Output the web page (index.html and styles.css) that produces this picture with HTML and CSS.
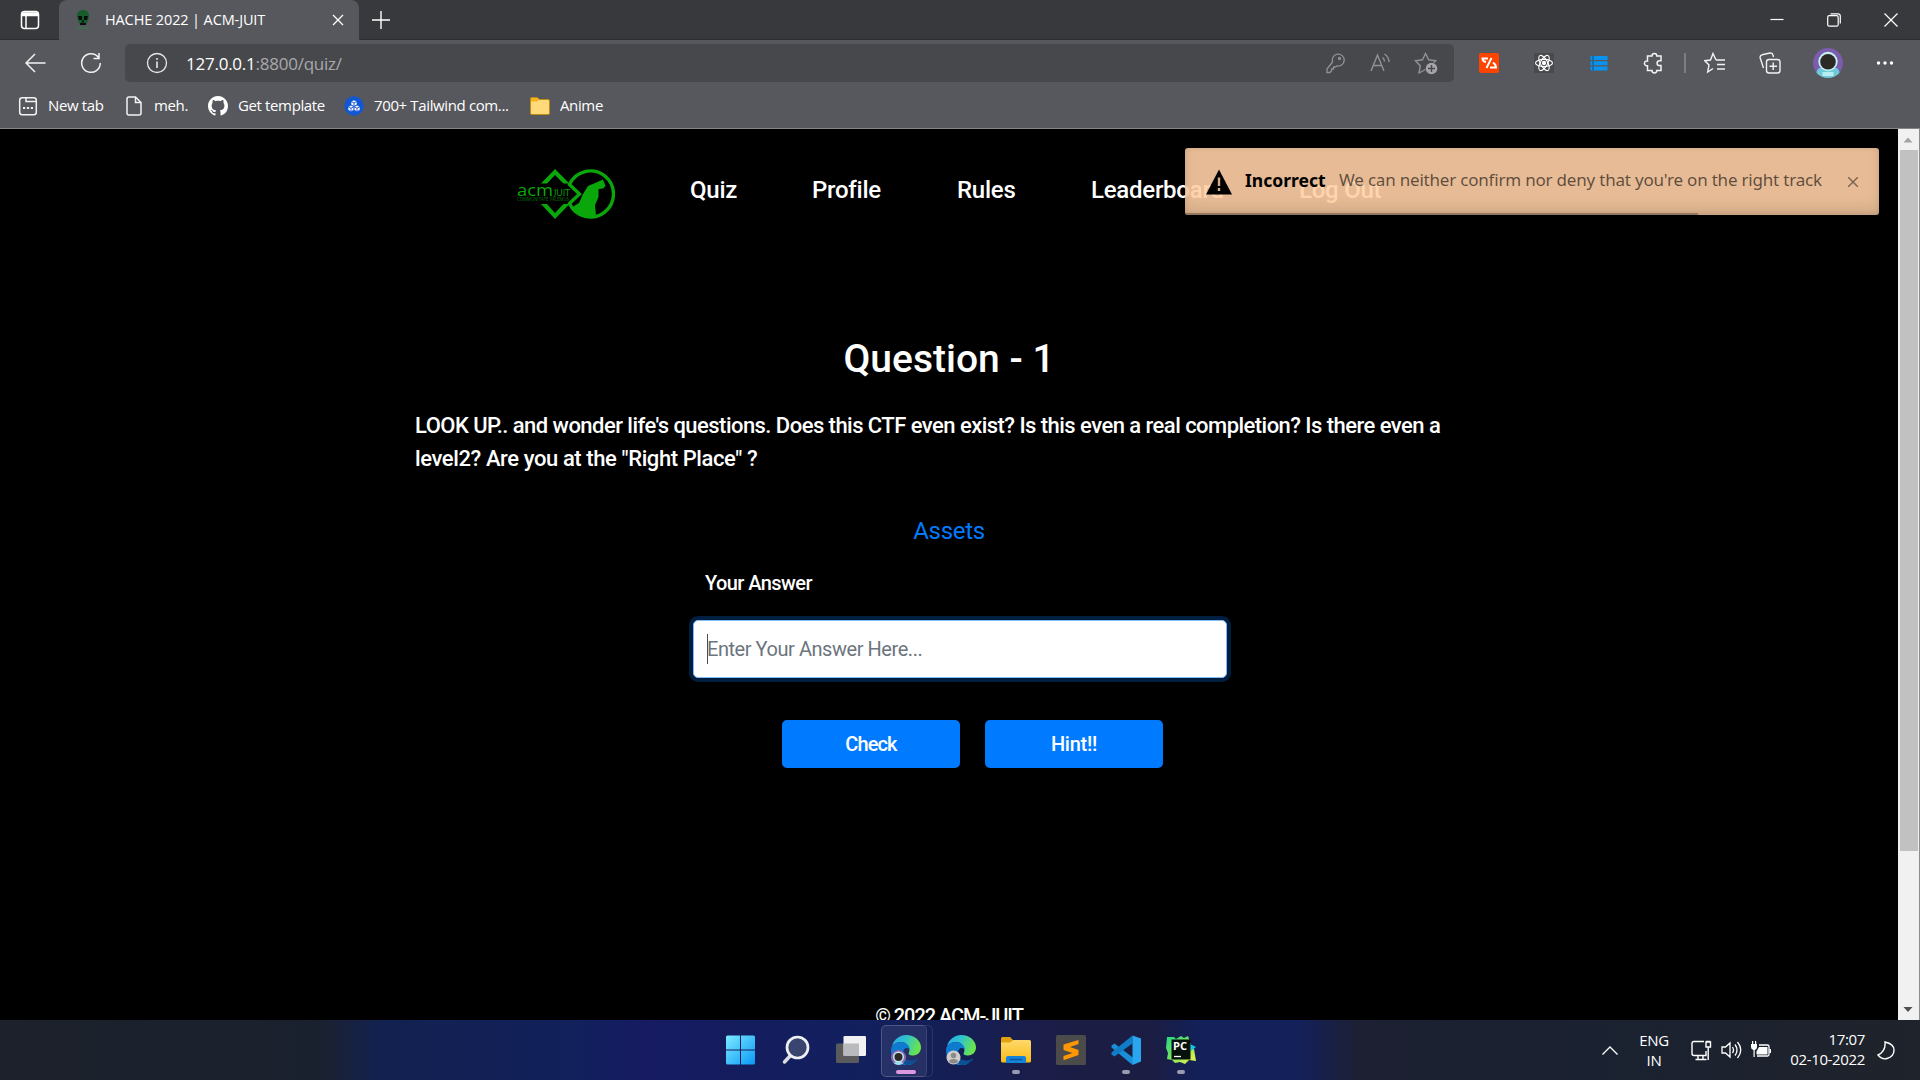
FILE: index.html
```html
<!DOCTYPE html>
<html lang="en">
<head>
<meta charset="utf-8">
<title>HACHE 2022 | ACM-JUIT</title>
<link rel="stylesheet" href="styles.css">
</head>
<body>
<div class="tabstrip">
  <div class="tabmenu"><svg width="20" height="20" viewBox="0 0 20 20" fill="none" stroke="#fff" stroke-width="1.5"><rect x="1.5" y="1.5" width="17" height="17" rx="3"/><path d="M2 3.5h16M2 5h16" stroke-width="2.5"/><path d="M6 6v12"/></svg></div>
  <div class="tab">
    <svg class="favicon" width="14" height="20" viewBox="0 0 14 20"><path d="M7 0C3 0 1 2.500 1 6l1 5 2 3h6l2-3 1-5c0-3.500-2-6-6-6z" fill="#175c2a"/><path d="M2 6h4v4H3zM8 6h4l-1 4H8zM6 10.500h2v2H6zM4 13h6v2H4z" fill="#061008"/><path d="M2 18h10" stroke="#39734a" stroke-width="2" stroke-dasharray="3 1"/></svg>
    <span class="tabtitle">HACHE 2022 | ACM-JUIT</span>
    <svg class="tabclose" width="12" height="12" viewBox="0 0 12 12" stroke="#fff" stroke-width="1.300"><path d="M1 1l10 10M11 1L1 11"/></svg>
  </div>
  <svg class="newtab" width="18" height="18" viewBox="0 0 18 18" stroke="#fff" stroke-width="1.400"><path d="M9 0v18M0 9h18"/></svg>
  <div class="winctl">
    <svg width="14" height="14" viewBox="0 0 14 14" stroke="#fff" stroke-width="1.200"><path d="M.5 6.500h13"/></svg>
    <svg width="14" height="14" viewBox="0 0 14 14" fill="none" stroke="#fff" stroke-width="1.200"><rect x=".7" y="2.700" width="10.500" height="10.500" rx="1.500"/><path d="M3.500.8H11q2.300 0 2.300 2.300v7.500"/></svg>
    <svg width="14" height="14" viewBox="0 0 14 14" stroke="#fff" stroke-width="1.200"><path d="M.5.5l13 13M13.500.5l-13 13"/></svg>
  </div>
</div>
<div class="toolbar">
  <svg class="back" width="21" height="20" viewBox="0 0 21 20" fill="none" stroke="#f2f2f2" stroke-width="1.500"><path d="M20.500 10H1M10 1L1 10l9 9"/></svg>
  <svg class="reload" width="22" height="22" viewBox="0 0 22 22" fill="none" stroke="#f2f2f2" stroke-width="1.500"><path d="M18.500 5.500a9.300 9.300 0 1 0 1.800 5.500M19 1v5.500h-5.500"/></svg>
  <div class="address">
    <svg width="22" height="22" viewBox="0 0 22 22" fill="none" stroke="#e8e8e8" stroke-width="1.300"><circle cx="11" cy="11" r="9.500"/><path d="M11 9.500V16M11 6v1.700" stroke-width="1.600"/></svg>
    <span class="url"><b>127.0.0.1</b>:8800/quiz/</span>
    <div class="addricons">
      <svg width="22" height="22" viewBox="0 0 22 22" fill="none" stroke="#929296" stroke-width="1.300"><path d="M8.500 10a6 6 0 1 1 4.500 4L11 15H9.500v2H7.500v2L6 20.500H3V17z"/><circle cx="15.500" cy="6.500" r="1"/></svg>
      <svg width="22" height="22" viewBox="0 0 22 22" fill="none" stroke="#929296" stroke-width="1.400"><path d="M2 19L8.500 3 15 19M4.500 13.500h8M13.500 5.500q2 1.500 2 4M15.500 2q4.500 3 4.500 8"/></svg>
      <svg width="24" height="24" viewBox="0 0 24 24" fill="none" stroke="#929296" stroke-width="1.400"><path d="M11.500 18.500L5 22l1.300-7L1.500 9.800l7-1L11.500 2.500l3.200 6.300 7 1-2 2"/><circle cx="17.500" cy="17.500" r="5.800" fill="#a5a5a8" stroke="none"/><path d="M17.500 14v7M14 17.500h7" stroke="#47484b"/></svg>
    </div>
  </div>
  <div class="extensions">
    <svg width="20" height="20" viewBox="0 0 20 20" fill="none" stroke="#fff" stroke-width="2"><rect width="20" height="20" rx="2" fill="#ff4400" stroke="none"/><path d="M9 5.500H3.500q0 3 3.500 3.500"/><path d="M12.500 5L7.500 15" /><path d="M11 14.500h6q0-3-3-5"/></svg>
    <svg class="e2" width="20" height="20" viewBox="0 0 20 20" fill="none" stroke="#fff" stroke-width="1.100"><rect width="20" height="20" fill="#494a4d" stroke="none"/><ellipse cx="10" cy="10" rx="8.500" ry="3.600"/><ellipse cx="10" cy="10" rx="8.500" ry="3.600" transform="rotate(60 10 10)"/><ellipse cx="10" cy="10" rx="8.500" ry="3.600" transform="rotate(120 10 10)"/><circle cx="10" cy="10" r="1.600" fill="#fff"/></svg>
    <svg class="e3" width="20" height="20" viewBox="0 0 20 20"><path d="M1.500 3h17v4h-17zM1.500 8.200h17v4h-17zM1.500 13.400h17v4h-17z" fill="#0a93ee"/><path d="M4 3v4M4 8.200v4M4 13.400v4" stroke="#0b4d80"/></svg>
    <svg class="e4" width="22" height="22" viewBox="0 0 22 22" fill="none" stroke="#f2f2f2" stroke-width="1.500"><path d="M4.500 4H9a2.400 2.400 0 1 1 4.800 0H18v4.800h-1.500a2.400 2.400 0 0 0 0 4.800H18V18.500h-4.200a2.400 2.400 0 0 1-4.800 0H4.500v-4.700H4a2.400 2.400 0 1 1 .5-4.700z"/></svg>
    <i class="divider"></i>
    <svg class="e5" width="22" height="22" viewBox="0 0 22 22" fill="none" stroke="#f2f2f2" stroke-width="1.400"><path d="M12 8L9 1.500 6.500 8 .8 8.700 5 13l-1.300 7L9 16.500M12 8h9M13 12.500h8M13 17h8"/></svg>
    <svg class="e6" width="22" height="22" viewBox="0 0 22 22" fill="none" stroke="#f2f2f2" stroke-width="1.400"><rect x="7.500" y="7.500" width="13.500" height="13.500" rx="2.500"/><path d="M14.200 10.500v7.500M10.500 14.200h7.500M4.500 16L1.200 6Q.7 3.500 3 2.800L11 1q2.500-.3 3 2l.5 2"/></svg>
    <svg class="e7" width="30" height="30" viewBox="0 0 30 30"><circle cx="15" cy="15" r="15" fill="#7c5cad"/><path d="M3.500 25q0-6 8-6h7q8 0 8 6-5 5-11.500 5t-11.500-5" fill="#70c9d8"/><circle cx="15" cy="13.500" r="9.700" fill="#c5f0f2"/><circle cx="15" cy="13.800" r="7.800" fill="#2d2924"/><path d="M9.500 24h11v4h-11z" fill="#b8edf2"/></svg>
    <svg class="e8" width="18" height="6" viewBox="0 0 18 6" fill="#fff"><circle cx="2.500" cy="3" r="1.700"/><circle cx="9" cy="3" r="1.700"/><circle cx="15.500" cy="3" r="1.700"/></svg>
  </div>
</div>
<div class="bookmarks">
  <a class="bm bm1"><svg width="20" height="20" viewBox="0 0 20 20" fill="none" stroke="#f2f2f2" stroke-width="1.500"><rect x="1.700" y="1.700" width="16.600" height="17" rx="2.500"/><path d="M8 2v3.500h10"/><path d="M5 12h10" stroke-width="2.200" stroke-dasharray="2.200 1.700"/></svg><span>New tab</span></a>
  <a class="bm bm2"><svg width="16" height="20" viewBox="0 0 16 20" fill="none" stroke="#f2f2f2" stroke-width="1.500"><path d="M9.500 1H3Q1 1 1 3v14q0 2 2 2h10q2 0 2-2V6.500zV6.500H15"/></svg><span>meh.</span></a>
  <a class="bm bm3"><svg width="20" height="20" viewBox="0 0 16 16" fill="#fff"><path d="M8 0C3.580 0 0 3.580 0 8c0 3.540 2.290 6.530 5.470 7.590.4.070.55-.17.55-.38 0-.19-.01-.82-.01-1.490-2.010.37-2.530-.49-2.690-.94-.09-.23-.48-.94-.82-1.130-.28-.15-.68-.52-.01-.53.63-.01 1.080.58 1.230.82.72 1.210 1.870.87 2.330.66.07-.52.28-.87.51-1.070-1.780-.2-3.640-.89-3.640-3.950 0-.87.31-1.590.82-2.150-.08-.2-.36-1.020.08-2.120 0 0 .67-.21 2.200.82.640-.18 1.320-.27 2-.27s1.360.09 2 .27c1.530-1.040 2.200-.82 2.200-.82.44 1.100.16 1.920.08 2.120.51.56.82 1.270.82 2.150 0 3.070-1.870 3.750-3.650 3.950.29.25.54.73.54 1.480 0 1.070-.01 1.930-.01 2.200 0 .21.15.46.55.38A8.010 8.010 0 0 0 16 8c0-4.420-3.580-8-8-8z"/></svg><span>Get template</span></a>
  <a class="bm bm4"><svg width="20" height="20" viewBox="0 0 20 20"><circle cx="10" cy="10" r="9.700" fill="#1156d4"/><g fill="#fff" stroke="#1156d4" stroke-width=".6"><path d="M10 4l3 1.500v3.300L10 10.300 7 8.800V5.500z"/><path d="M7 9.200l3 1.500V14l-3 1.500L4 14v-3.300zM13 9.200l3 1.500V14l-3 1.500-3-1.500v-3.300z"/><path d="M7 5.500L10 7l3-1.500M10 7v3M4 10.700l3 1.500 3-1.500 3 1.500 3-1.500M7 12.200v3M13 12.200v3" fill="none" stroke-width=".9"/></g></svg><span>700+ Tailwind com...</span></a>
  <a class="bm bm5"><svg width="20" height="18" viewBox="0 0 20 18"><path d="M.5 2q0-1.500 1.500-1.500h5l2 2h9q1.500 0 1.500 1.500v12q0 1.500-1.500 1.500H2Q.5 17.500.5 16z" fill="#ffd97a" stroke="#c08d13"/><path d="M1 4.500h6L9 3V2L7 1H1z" fill="#f2b51d"/></svg><span>Anime</span></a>
</div>
<div class="viewport">
  <main class="page">
    <nav class="nav">
      <svg class="logo" width="98" height="50" viewBox="0 0 98 50">
        <path d="M38 0l14.500 14.500h-6L38 6l-8 8.500h-6zM38 50l14.500-15h-6L38 44l-8-9h-6z" fill="#0aa70a"/>
        <path d="M52.500 15.500A23 23 0 1 1 52.500 34.500L62.500 25z" fill="none" stroke="#0aa70a" stroke-width="3.300"/>
        <path d="M86 10.500L88.500 17 86 19.500 81.500 20l0 8-3.500 8 1 11Q64 50 54 39l8-5 4-9 5-8 6-2.500z" fill="#0aa70a"/>
        <text x="0" y="26.500" class="logo-a" textLength="36" lengthAdjust="spacingAndGlyphs">acm</text>
        <text x="37" y="26.500" class="logo-b" textLength="16">JUIT</text>
        <text x="0" y="31.500" class="logo-c" textLength="52" lengthAdjust="spacingAndGlyphs">COMMUNITATE VALEMUS</text>
      </svg>
      <a class="n1">Quiz</a><a class="n2">Profile</a><a class="n3">Rules</a><a class="n4">Leaderboard</a><a class="n5">Log Out</a>
    </nav>
    <h1 class="question">Question - 1</h1>
    <p class="prompt"><span class="p1">LOOK UP.. and wonder life's questions. Does this CTF even exist? Is this even a real completion? Is there even a</span><br><span class="p2">level2? Are you at the "Right Place" ?</span></p>
    <a class="assets">Assets</a>
    <form class="answer">
      <label>Your Answer</label>
      <div class="field"><i class="caret"></i><span>Enter Your Answer Here...</span></div>
      <div class="buttons"><div class="btn check">Check</div><div class="btn hint">Hint!!</div></div>
    </form>
    <footer><span>© 2022 ACM-JUIT</span></footer>
  </main>
  <div class="scrollbar">
    <svg width="20" height="21" viewBox="0 0 20 21"><path d="M5.500 13.500h9L10 8.500z" fill="#a3a3a3"/></svg>
    <div class="thumb"></div>
    <svg width="20" height="21" viewBox="0 0 20 21"><path d="M5.500 8h9L10 13z" fill="#505050"/></svg>
  </div>
  <div class="toast">
    <svg class="warn" width="26" height="26" viewBox="0 0 26 26"><path d="M13 .5L26 25.500H0z"/><path d="M13 8.500v8.500M13 19v3" stroke="#d6ad8b" stroke-width="2.400"/></svg>
    <strong>Incorrect</strong><span class="msg">We can neither confirm nor deny that you're on the right track</span>
    <svg class="x" width="10" height="10" viewBox="0 0 10 10" stroke="#77604d" stroke-width="1.300"><path d="M0 0l10 10M10 0L0 10"/></svg>
    <i class="progress"></i>
  </div>
</div>
<svg class="defs" width="0" height="0">
  <defs>
    <linearGradient id="eg" x1="0" y1="0" x2="1" y2="0.300"><stop offset="0" stop-color="#27a8e8"/><stop offset=".5" stop-color="#2fc3cf"/><stop offset="1" stop-color="#69e34d"/></linearGradient>
    <linearGradient id="wg" x1="0" y1="0" x2="1" y2="1"><stop offset="0" stop-color="#7deaff"/><stop offset="1" stop-color="#0a98f5"/></linearGradient>
    <linearGradient id="fg" x1="0" y1="0" x2="0" y2="1"><stop offset="0" stop-color="#ffd96b"/><stop offset="1" stop-color="#f9bb17"/></linearGradient>
    <linearGradient id="pg" x1="0" y1="0" x2="1" y2="1"><stop offset="0" stop-color="#21d789"/><stop offset=".5" stop-color="#7be45b"/><stop offset="1" stop-color="#fcf84a"/></linearGradient>
    <symbol id="edge" viewBox="0 0 30 30"><path d="M1 11C3 4 9 0 15 0c9 0 15 6 15 12.500 0 5-4 8-8 8-3 0-5.500-1-4-3C20 12 15 7 10 7c-4 0-7 2-9 4z" fill="url(#eg)"/><path d="M0 15c0-5 5-8 9.500-8 5 0 9 3 9.500 8-1.500-2-3.500-2.500-5-1.500-3 2-2 8 1 11.500 2 2.500 5 4 8 3.500C20 30 17 30 15 30 6 30 0 24 0 15z" fill="#0f7bd0"/><path d="M11 15.500C10 22 15 26 21 25.500c3 0 5.500-2.500 6.500-2C25 27.500 20 30 15 30 9 27 7 20 11 15.500z" fill="#0c4f93"/></symbol>
  </defs>
</svg>
<div class="taskbar">
  <div class="apps">
    <div class="app"><svg width="30" height="30" viewBox="0 0 30 30"><g fill="url(#wg)"><path d="M1.500.5H14v14H0V2Q0 .5 1.500.5zM15 .5h12.500Q29 .5 29 2v12.500H15zM0 15.500h14v14H1.500Q0 29.500 0 28zM15 15.500h14V28q0 1.500-1.500 1.500H15z"/></g></svg></div>
    <div class="app"><svg width="30" height="30" viewBox="0 0 30 30"><path d="M9.500 20.500L3.500 27" stroke="#dcdde2" stroke-width="3.500" stroke-linecap="round"/><circle cx="16.500" cy="12.500" r="10.500" fill="#39456f" stroke="#eef0f4" stroke-width="2.700"/></svg></div>
    <div class="app"><svg width="30" height="30" viewBox="0 0 30 30"><rect y="8.500" width="23" height="19.500" rx="1.200" fill="#5a5a5c"/><rect x="7.500" y="1" width="22.500" height="20" rx="1.200" fill="#f1f1f4"/><path d="M7.500 8.500H23V21H8.500q-1 0-1-1z" fill="#b9babd"/></svg></div>
    <div class="app active"><svg width="30" height="30"><use href="#edge"/><circle cx="7.500" cy="22.500" r="7.500" fill="#8a66b5"/><circle cx="7.500" cy="22" r="5.500" fill="#c3ecf0"/><circle cx="7.500" cy="22" r="4" fill="#2d2924"/><path d="M2.500 28q5-3 10 0-5 4-10 0" fill="#9fdfe9"/></svg><i class="dot"></i></div>
    <div class="app"><svg width="30" height="30"><use href="#edge"/><circle cx="7.500" cy="22.500" r="7" fill="#cfcdcb"/><circle cx="7.500" cy="20.500" r="2.700" fill="#8d8986"/><path d="M3 27q0-3 4.500-3t4.500 3q-4 3-9 0" fill="#8d8986"/></svg></div>
    <div class="app"><svg width="30" height="30" viewBox="0 0 30 30"><path d="M0 3.500Q0 2 1.500 2H9l3 3-3 4H0z" fill="#e2a10f"/><path d="M0 7.500h9L12 5h16.500q1.500 0 1.500 1.500V26q0 1.500-1.500 1.500h-27Q0 27.500 0 26z" fill="url(#fg)"/><path d="M5 28v-5q0-2 2-2h16q2 0 2 2v5z" fill="#1583d8"/><path d="M9 24.500h12" stroke="#0b549c" stroke-width="1.300"/></svg><i class="dot"></i></div>
    <div class="app"><svg width="30" height="30" viewBox="0 0 30 30"><rect width="30" height="30" rx="1.500" fill="#4b4b4b"/><path d="M22.500 5L7.500 9.500v5.500l9 3-9 3v4.200L22.500 20v-5l-8.500-3 8.500-3z" fill="#ff9800"/></svg></div>
    <div class="app"><svg width="30" height="30" viewBox="0 0 30 30"><path d="M.5 10.500L3.500 8.500l19 14.500-1 7L.5 12.500z" fill="#188fd8"/><path d="M21.500.5v8L3.500 21.500l-3-2v-2z" fill="#0f7dc7"/><path d="M21.500.5l8.500 3v23l-8.500 3.500z" fill="#2aa5f0"/></svg><i class="dot"></i></div>
    <div class="app"><svg width="30" height="30" viewBox="0 0 30 30"><path d="M1 2l7 0 2 2 5-3 3 2 4-2 2 6 2 7 2 0 2 12-7-1-4 4-5-2-5 1-3-3-5-1 1-6-2-5z" fill="url(#pg)"/><path d="M24 9l6 3-5 4z" fill="#13c7ec"/><rect x="5.500" y="4.500" width="19" height="20" fill="#07110b"/><text x="7" y="14.500" class="pc" textLength="14" lengthAdjust="spacingAndGlyphs">PC</text><path d="M8 21.500h7" stroke="#fff" stroke-width="1.300"/></svg><i class="dot"></i></div>
  </div>
  <div class="tray">
    <svg width="16" height="9" viewBox="0 0 16 9" fill="none" stroke="#fff" stroke-width="1.300"><path d="M.5 8.500L8 1l7.500 7.500"/></svg>
    <div class="lang">ENG<br>IN</div>
    <svg class="net" width="21" height="21" viewBox="0 0 21 21" fill="none" stroke="#fff" stroke-width="1.400"><path d="M13 1.500H3q-2 0-2 2v10q0 2 2 2h12V11M7 15.500V19M12 15.500V19M4.500 19.500h11"/><path d="M15 2v5h4.500V2zM17.200 7v13M15 1.500h4.500"/></svg>
    <svg class="vol" width="21" height="20" viewBox="0 0 21 20" fill="none" stroke="#fff" stroke-width="1.300"><path d="M1 7h3.500L9 3v14l-4.500-4H1zM11.500 7q2 3 0 6M14 4.500q4 5.500 0 11M16.500 2q6.500 8 0 16"/></svg>
    <svg class="bat" width="21" height="18" viewBox="0 0 21 18"><path d="M8 4h8.500Q18 4 18 5.500v8Q18 15 16.500 15H6" fill="none" stroke="#fff" stroke-width="1.300"/><path d="M8 6h8.500v7.500H5.500v-3zM18.500 8H20v4h-1.500zM0 3h6v3q0 2.500-2.300 3v7H2.500V9Q0 8.500 0 6zM1 0h1.200v3H1zM4 0h1.200v3H4z" fill="#fff"/></svg>
    <div class="clock"><span class="tm">17:07</span><span class="dt">02-10-2022</span></div>
    <svg width="18" height="19" viewBox="0 0 18 19" fill="none" stroke="#fff" stroke-width="1.400"><path d="M8 1q1 9-7 13 4 5 9 3.500 7-2 7-8.500 0-6-9-8z"/></svg>
  </div>
</div>
</body>
</html>
```
FILE: styles.css
```css
* { box-sizing: border-box; }
body { margin: 0; width: 1920px; height: 1080px; overflow: hidden; background: #000; color: #fff; font-family: "Open Sans", "Noto Sans", sans-serif; display: flex; flex-direction: column; }
svg { display: block; flex: none; }
span, a, strong, label { white-space: nowrap; }
.defs { position: absolute; }

.tabstrip { height: 40px; flex: none; background: #38393c; display: flex; align-items: center; box-shadow: inset 0 -1px #2d2e31; }
.tabmenu { width: 59px; padding-left: 20px; }
.tab { width: 300px; height: 40px; background: #57585d; border-radius: 8px 8px 0 0; display: flex; align-items: center; padding-left: 17px; }
.tabtitle { margin-left: 15px; width: 227px; font-size: 14.500px; letter-spacing: -0.120px; padding-bottom: 2px; }
.newtab { margin-left: 13px; }
.winctl { margin-left: auto; display: flex; gap: 43px; padding-right: 22px; }

.toolbar { height: 46px; flex: none; background: #57585d; display: flex; align-items: center; padding-left: 25px; }
.reload { margin-left: 34px; }
.address { margin-left: 23px; width: 1329px; height: 38px; border-radius: 5px; background: #47484b; display: flex; align-items: center; padding-left: 21px; }
.url { margin-left: 18px; font-size: 17px; letter-spacing: -0.240px; color: #a8a8ab; }
.url b { font-weight: 400; color: #fff; }
.addricons { margin-left: auto; display: flex; gap: 23px; padding-right: 16px; align-items: center; }
.extensions { flex: 1; display: flex; align-items: center; padding-left: 25px; }
.e2, .e3 { margin-left: 35px; }
.e4 { margin-left: 34px; }
.divider { width: 2px; height: 20px; background: #7c7d81; margin: 0 18px 0 19px; }
.e6, .e8 { margin-left: 33px; }
.e7 { margin-left: 32px; }

.bookmarks { height: 43px; flex: none; background: #57585d; border-bottom: 1px solid #85868a; display: flex; align-items: center; padding: 0 0 2px 18px; font-size: 15px; letter-spacing: -0.370px; }
.bm { display: flex; align-items: center; gap: 10px; flex: none; }
.bm span { padding-bottom: 2px; }
.bm1 { width: 108px; }
.bm2 { width: 82px; gap: 12px; }
.bm3 { width: 136px; }
.bm4 { width: 186px; }

.viewport { position: relative; height: 891px; flex: none; display: flex; overflow: hidden; }
.page { width: 1898px; height: 891px; overflow: hidden; font-family: Roboto, "Open Sans", sans-serif; }
.nav { height: 129px; display: flex; padding-left: 517px; font-size: 24px; line-height: 36px; font-weight: 500; padding-top: 40px; letter-spacing: -0.250px; }
.nav a { margin-top: 3px; }
.logo-a { font: 17px "Open Sans", sans-serif; letter-spacing: 0; fill: #0aa70a; }
.logo-b { font: 9px "Open Sans", sans-serif; letter-spacing: 0; fill: #0aa70a; }
.logo-c { font: 4.500px "Open Sans", sans-serif; letter-spacing: 0; fill: #07700a; }
.n1 { margin-left: 75px; width: 122px; }
.n2 { width: 145px; }
.n3 { width: 134px; }
.n4 { width: 208px; }
.question { margin: 71px 0 0; font-size: 39px; line-height: 60px; font-weight: 500; text-align: center; }
.prompt { margin: 20px 0 0 415px; font-size: 22px; line-height: 33px; font-weight: 500; }
.p1 { letter-spacing: -0.540px; }
.p2 { letter-spacing: -0.400px; }
.assets { display: block; margin-top: 38px; font-size: 24px; line-height: 36px; text-align: center; letter-spacing: -0.300px; color: #007bff; }
.answer { width: 534px; margin: 0 0 0 693px; }
.answer label { display: block; margin: 19px 0 0 12px; font-size: 20px; line-height: 30px; font-weight: 500; letter-spacing: -0.570px; }
.field { margin-top: 22px; height: 58px; background: #fff; border: 1px solid #80bdff; border-radius: 5px; box-shadow: 0 0 0 4px #001f40; display: flex; align-items: center; padding-left: 13px; font-size: 20px; letter-spacing: -0.450px; color: #6c757d; }
.caret { width: 1px; height: 30px; background: #495057; margin-right: -1px; }
.buttons { display: flex; gap: 25px; margin: 42px 0 0 89px; }
.btn { width: 178px; height: 48px; border-radius: 5px; background: #007bff; text-align: center; font-size: 20px; line-height: 48px; font-weight: 500; }
.check { letter-spacing: -0.900px; }
.hint { letter-spacing: -0.250px; }
footer { margin-top: 233px; text-align: center; font-size: 20px; line-height: 30px; font-weight: 500; letter-spacing: -1.050px; }

.scrollbar { width: 22px; height: 891px; background: #f1f1f1; border-right: 1px solid #8c8d91; display: flex; flex-direction: column; }
.thumb { height: 701px; margin: 0 1px 0 2px; background: #c1c1c1; }
.scrollbar svg:last-child { margin-top: auto; }

.toast { position: absolute; left: 1185px; top: 19px; width: 694px; height: 67px; border-radius: 3px; background: rgba(255, 207, 165, 0.9); box-shadow: inset 0 -10px 20px -10px rgba(0, 0, 0, 0.2), inset 0 0 5px rgba(0, 0, 0, 0.1); display: flex; align-items: center; padding-left: 21px; overflow: hidden; font-family: "Noto Sans", sans-serif; font-size: 17.500px; }
.toast strong { margin-left: 13px; width: 94px; color: #000; padding-bottom: 4px; }
.msg { width: 509px; color: rgba(0, 0, 0, 0.6); font-size: 17px; letter-spacing: -0.200px; padding-bottom: 4px; }
.progress { position: absolute; left: 0; bottom: 0; width: 513px; height: 2px; background: #927863; }

.taskbar { height: 60px; flex: none; background: linear-gradient(90deg, #1c212b 0, #1a212e 320px, #132150 380px, #12205c 580px, #161b62 650px, #141c5e 720px, #12205e 860px, #161e52 980px, #1c1d46 1060px, #1b1d42 1150px, #13205a 1200px, #14205a 1300px, #1c2032 1360px, #1a2130 1600px, #1f232b 1920px); display: flex; align-items: center; padding-left: 726px; }
.apps { display: flex; gap: 25px; }
.app { position: relative; width: 30px; height: 60px; display: flex; align-items: center; }
.active::before, .active::after { content: ""; position: absolute; left: -10px; top: 5px; width: 44px; height: 50px; border: 1px solid rgba(255,255,255,.1); border-radius: 5px; background: rgba(255,255,255,.08); }
.active::after { width: 50px; background: none; }
.active svg { position: relative; }
.dot { position: absolute; left: 11px; bottom: 6px; width: 8px; height: 4px; border-radius: 2px; background: #9b9bb0; }
.active .dot { left: 5px; width: 20px; background: #dd98e0; }
.pc { font: bold 10px "Open Sans", sans-serif; fill: #fff; }
.tray { margin-left: auto; display: flex; align-items: center; padding-right: 25px; font-size: 15px; line-height: 20px; }
.lang { width: 50px; margin-left: 11px; padding-bottom: 1px; text-align: center; letter-spacing: -0.300px; }
.net { margin-left: 12px; }
.vol { margin-left: 9px; }
.bat { margin-left: 9px; }
.clock { width: 84px; margin: 0 12px 0 9px; padding-bottom: 2px; display: flex; flex-direction: column; align-items: flex-end; letter-spacing: -0.350px; }
```
